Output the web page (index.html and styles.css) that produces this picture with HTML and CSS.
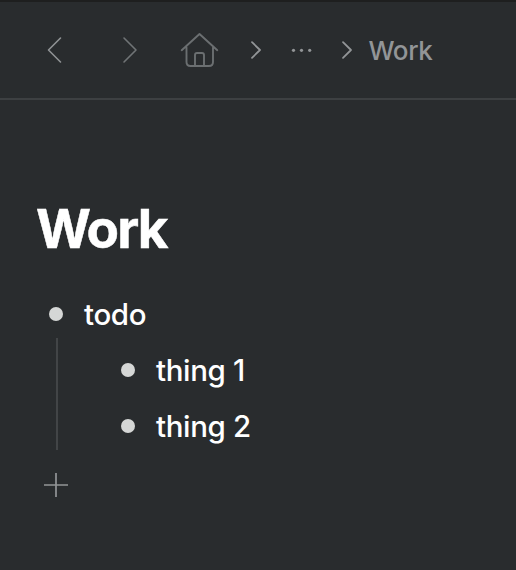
FILE: index.html
```html
<!DOCTYPE html>
<html lang="en">
<head>
<meta charset="utf-8">
<title>Work</title>
<link rel="stylesheet" href="styles.css">
</head>
<body>
<header class="topbar">
  <svg class="icon back" width="16" height="28" viewBox="0 0 16 28"><path d="M14.5 2 2.5 14l12 12"/></svg>
  <svg class="icon forward" width="16" height="28" viewBox="0 0 16 28"><path d="m2 2 12 12L2 26"/></svg>
  <nav class="crumbs">
    <svg class="icon home" width="40" height="36" viewBox="0 0 40 36"><path d="M1.7 18.2 19.5 2l17.8 16.2M6.5 15.500V30q0 4 4 4h18.500q4 0 4-4V15.500M15 34V23q0-2 2-2h5q2 0 2 2v11"/></svg>
    <svg class="icon sep" width="12" height="20" viewBox="0 0 12 20"><path d="m2 2.200 8 7.800-8 7.800"/></svg>
    <svg class="dots" width="24" height="6" viewBox="0 0 24 6"><circle cx="3.500" cy="3.300" r="1.600"/><circle cx="11.500" cy="3.300" r="1.600"/><circle cx="19.700" cy="3.300" r="1.600"/></svg>
    <svg class="icon sep last" width="12" height="20" viewBox="0 0 12 20"><path d="m2 2.200 8 7.800-8 7.800"/></svg>
    <span class="current">Work</span>
  </nav>
</header>
<main class="page">
  <h1 class="title">Work</h1>
  <ul class="list">
    <li>
      <div class="item"><span class="bullet"></span><span class="label">todo</span></div>
      <ul class="children">
        <li class="item"><span class="bullet"></span><span class="label">thing 1</span></li>
        <li class="item"><span class="bullet"></span><span class="label">thing 2</span></li>
      </ul>
    </li>
  </ul>
  <svg class="add" width="24" height="24" viewBox="0 0 24 24"><path d="M0 12h24M12 0v24"/></svg>
</main>
</body>
</html>
```

FILE: styles.css
```css
* { box-sizing: border-box; }
body {
  margin: 0;
  height: 570px;
  overflow: hidden;
  background: #292c2e;
  color: #fff;
  font-family: Inter, "Liberation Sans", sans-serif;
}
ul { list-style: none; margin: 0; padding: 0; }
svg { display: block; flex: none; }
.topbar {
  display: flex;
  align-items: center;
  height: 100px;
  padding-left: 46px;
  border-top: 2px solid #1e1f1f;
  border-bottom: 2px solid #3d4042;
}
.icon { fill: none; stroke: #707476; stroke-width: 1.6; stroke-linecap: round; stroke-linejoin: round; }
.back { stroke: #8f9294; }
.forward { margin-left: 60px; }
.crumbs { display: flex; align-items: center; margin-left: 42px; }
.home { stroke: #6b6f71; stroke-width: 1.9; }
.sep { margin-left: 30px; stroke: #929597; stroke-width: 1.8; }
.dots { margin-left: 28px; fill: #929597; }
.last { margin-left: 27px; }
.current {
  margin-left: 15.5px;
  padding-top: 2px;
  color: #929597;
  font-size: 26px;
  line-height: 32px;
  font-weight: 450;
  letter-spacing: -0.4px;
}
.page { padding: 96px 0 0 36px; }
.title {
  margin: 0 0 23px;
  font-size: 53px;
  line-height: 67px;
  font-weight: 700;
  letter-spacing: -1.8px;
  -webkit-text-stroke: 0.5px #fff;
}
.item { display: flex; align-items: center; height: 56px; }
.bullet { width: 14px; height: 14px; margin: 0 21px 0 13px; border-radius: 50%; background: #d5d7d6; }
.label { font-size: 29.5px; line-height: 40px; font-weight: 500; letter-spacing: -0.35px; }
.children {
  height: 112px;
  margin: -4px 0 0 20px;
  padding-left: 50px;
  border-left: 2px solid #424547;
}
.children .item { position: relative; top: 4px; }
.add { margin: 23px 0 0 8px; fill: none; stroke: #929597; stroke-width: 1.7; }
```
